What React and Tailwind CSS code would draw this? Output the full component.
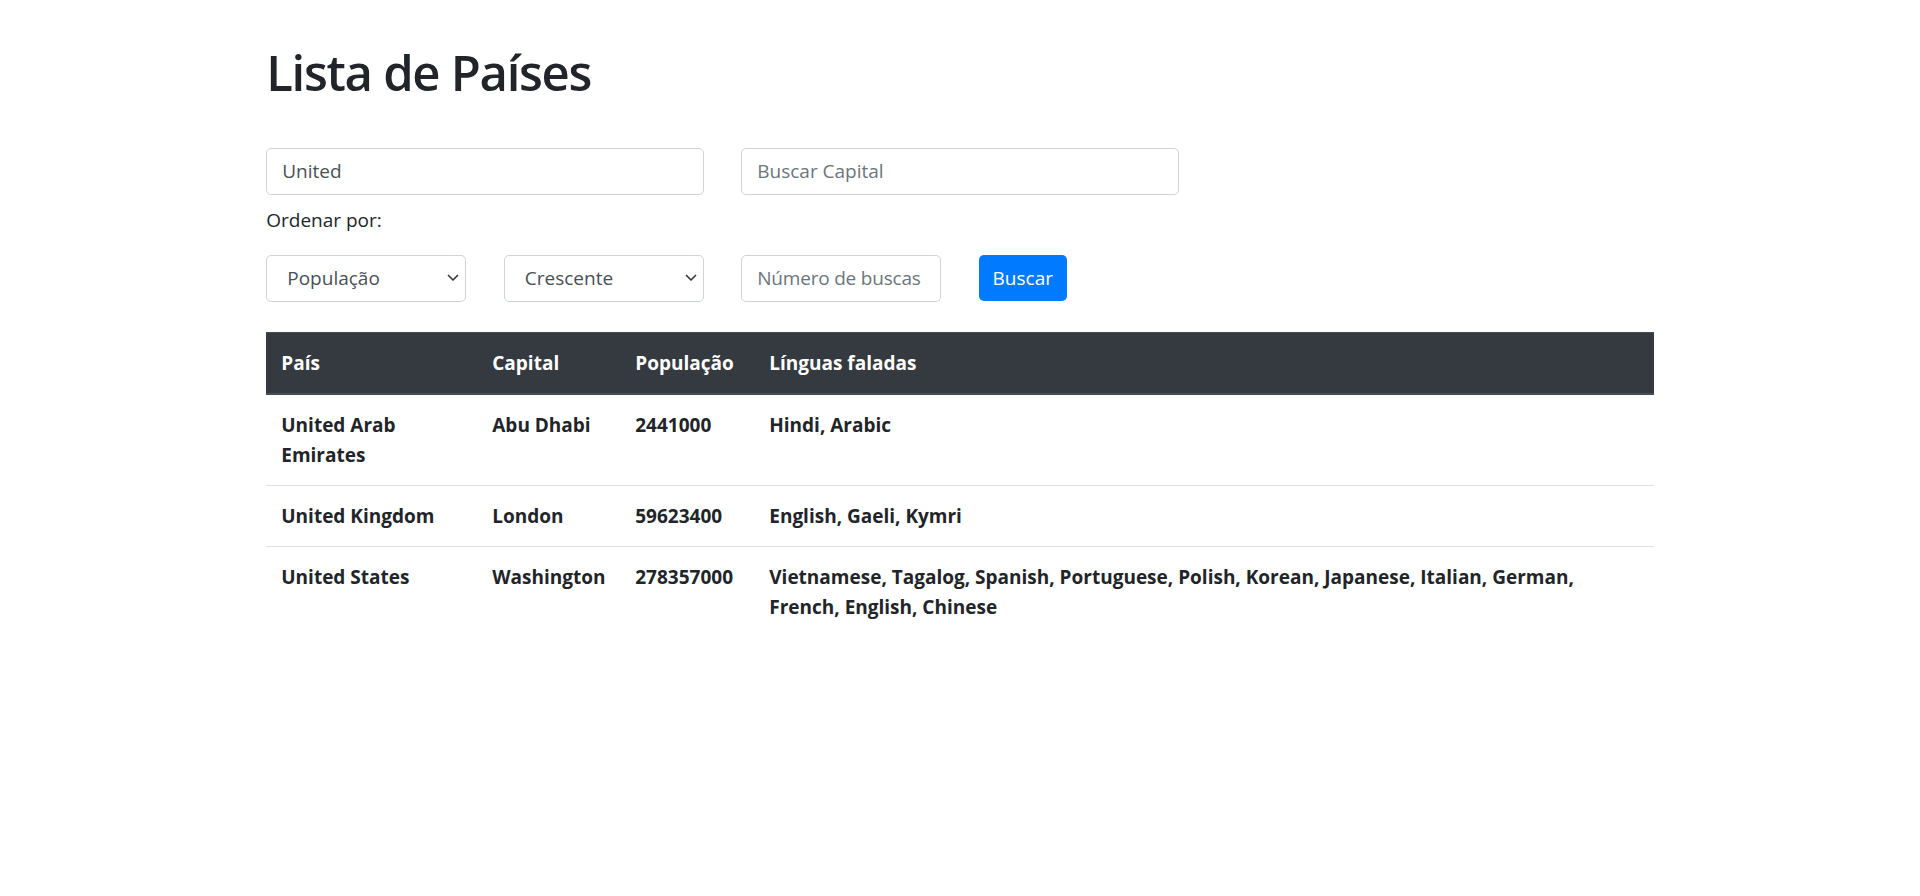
import { useState } from "react";

const countries = [
  {
    name: "United Arab Emirates",
    capital: "Abu Dhabi",
    population: 2441000,
    languages: "Hindi, Arabic",
  },
  {
    name: "United Kingdom",
    capital: "London",
    population: 59623400,
    languages: "English, Gaeli, Kymri",
  },
  {
    name: "United States",
    capital: "Washington",
    population: 278357000,
    languages:
      "Vietnamese, Tagalog, Spanish, Portuguese, Polish, Korean, Japanese, Italian, German, French, English, Chinese",
  },
];

function Chevron() {
  return (
    <svg
      className="pointer-events-none absolute right-[7px] top-1/2 -translate-y-1/2"
      width="12"
      height="8"
      viewBox="0 0 12 8"
      fill="none"
    >
      <polyline
        points="1.5,1.5 6,6 10.5,1.5"
        stroke="#3b3b3b"
        strokeWidth="1.7"
        strokeLinecap="round"
        strokeLinejoin="round"
      />
    </svg>
  );
}

export default function App() {
  const [country, setCountry] = useState("United");
  const [capital, setCapital] = useState("");
  const [sortBy, setSortBy] = useState("populacao");
  const [order, setOrder] = useState("asc");
  const [limit, setLimit] = useState("");

  const inputCls =
    "h-[47.5px] w-[437.5px] rounded-[5px] border-[1.25px] border-[#ced4da] bg-white px-[15px] text-[19px] text-[#495057] placeholder:text-[#6c757d] outline-none";

  const selectCls =
    "h-[47.5px] w-full appearance-none rounded-[5px] border-[1.25px] border-[#ced4da] bg-white pl-[20px] pr-[30px] text-[19px] text-[#495057] outline-none";

  return (
    <div className="min-h-screen bg-white font-['Open_Sans',sans-serif] text-[19px] leading-[30px] text-[#212529]">
      <div className="mx-auto w-[1425px] px-[18.75px] pt-[41.5px]">
        <h1 className="mb-[46px] text-[49px] font-semibold leading-[60px] tracking-[-1.3px]">
          Lista de Países
        </h1>

        {/* Busca */}
        <div className="flex gap-[37.5px]">
          <input
            className={inputCls}
            value={country}
            onChange={(e) => setCountry(e.target.value)}
          />
          <input
            className={inputCls}
            placeholder="Buscar Capital"
            value={capital}
            onChange={(e) => setCapital(e.target.value)}
          />
        </div>

        <label className="mt-[10px] mb-[19.5px] block">Ordenar por:</label>

        {/* Ordenação */}
        <div className="flex items-start gap-[37.5px]">
          <div className="relative w-[200px]">
            <select
              className={selectCls}
              value={sortBy}
              onChange={(e) => setSortBy(e.target.value)}
            >
              <option value="nome">Nome</option>
              <option value="capital">Capital</option>
              <option value="populacao">População</option>
            </select>
            <Chevron />
          </div>
          <div className="relative w-[200px]">
            <select
              className={selectCls}
              value={order}
              onChange={(e) => setOrder(e.target.value)}
            >
              <option value="asc">Crescente</option>
              <option value="desc">Decrescente</option>
            </select>
            <Chevron />
          </div>
          <input
            className="h-[47.5px] w-[200px] rounded-[5px] border-[1.25px] border-[#ced4da] bg-white px-[15px] text-[19px] tracking-[-0.2px] text-[#495057] placeholder:text-[#6c757d] outline-none"
            placeholder="Número de buscas"
            value={limit}
            onChange={(e) => setLimit(e.target.value)}
          />
          <button className="h-[46px] w-[88px] rounded-[5px] bg-[#007bff] text-[19px] text-white">
            Buscar
          </button>
        </div>

        {/* Tabela */}
        <table className="mt-[30px] w-full table-fixed border-collapse text-left font-bold">
          <thead>
            <tr className="bg-[#343a40] text-white">
              <th className="w-[211px] border-t-[1.25px] border-b-[2.5px] border-[#454d55] px-[15px] py-[15px] align-bottom">
                País
              </th>
              <th className="w-[143px] border-t-[1.25px] border-b-[2.5px] border-[#454d55] px-[15px] py-[15px] align-bottom">
                Capital
              </th>
              <th className="w-[134px] border-t-[1.25px] border-b-[2.5px] border-[#454d55] px-[15px] py-[15px] align-bottom">
                População
              </th>
              <th className="border-t-[1.25px] border-b-[2.5px] border-[#454d55] px-[15px] py-[15px] align-bottom">
                Línguas faladas
              </th>
            </tr>
          </thead>
          <tbody>
            {countries.map((c, i) => (
              <tr
                key={c.name}
                className={i > 0 ? "border-t-[1.25px] border-[#dee2e6]" : ""}
              >
                <td className="p-[15px] align-top">{c.name}</td>
                <td className="p-[15px] align-top">{c.capital}</td>
                <td className="p-[15px] align-top">{c.population}</td>
                <td className="p-[15px] align-top">{c.languages}</td>
              </tr>
            ))}
          </tbody>
        </table>
      </div>
    </div>
  );
}
